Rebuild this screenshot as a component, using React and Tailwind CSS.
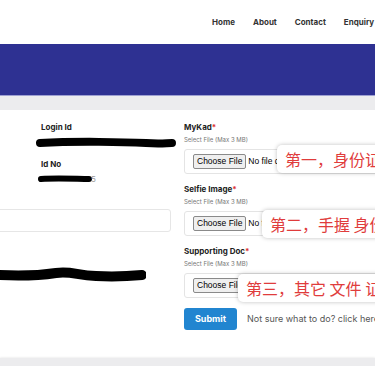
import React from "react";

const font = { fontFamily: "Inter, 'Noto Sans', sans-serif" };

function Scribble({ w, h, d, sw }) {
  return (
    <svg width={w} height={h} viewBox={`0 0 ${w} ${h}`} className="block">
      <path d={d} stroke="#000" strokeWidth={sw} strokeLinecap="round" fill="none" />
    </svg>
  );
}

function FileRow({ label, top, callout, calloutLeft, calloutWidth, noFile }) {
  return (
    <div className="relative">
      <div className="text-[8px] font-bold text-[#222] leading-[10px]">
        {label}
        <span className="text-[#d33]">*</span>
      </div>
      <div className="text-[6px] text-[#777] leading-[8px] mt-[4px]">Select File (Max 3 MB)</div>
      <div className="mt-[5px] h-[25px] w-[220px] border border-[#e4e4e4] rounded-[3px] flex items-center pl-[8px] gap-[2px]">
        <span
          className="h-[15px] px-[3px] flex items-center bg-[#efefef] border border-[#8a8a8a] rounded-[2px] text-[8.5px] text-black"
          style={{ fontFamily: "'Liberation Sans', Arial, sans-serif" }}
        >
          Choose File
        </span>
        <span className="text-[8.5px] text-black" style={{ fontFamily: "'Liberation Sans', Arial, sans-serif" }}>
          {noFile}
        </span>
      </div>
      <div
        className="absolute h-[28px] bg-white rounded-[5px] shadow-[0_0_4px_rgba(0,0,0,0.25)] flex items-center pl-[8px] text-[16px] text-[#e03c3c] whitespace-nowrap"
        style={{ left: calloutLeft, top: top, width: calloutWidth, fontFamily: "'Noto Sans CJK SC', sans-serif" }}
      >
        {callout}
      </div>
    </div>
  );
}

export default function App() {
  return (
    <div className="w-[375px] h-[366px] overflow-hidden bg-white relative" style={font}>
      <nav className="h-[44px] flex items-center pl-[212px] gap-[18px] text-[8px] font-bold text-[#333] whitespace-nowrap">
        <span>Home</span>
        <span>About</span>
        <span>Contact</span>
        <span>Enquiry &amp; Complaint</span>
      </nav>
      <div className="h-[52px] bg-[#2e3192] border-b border-[#9ea0d2]" />
      <div className="h-[14px] bg-[#ececee]" />
      <div className="flex h-[248px]">
        <div className="w-[184px] shrink-0 flex flex-col">
          <div className="pl-[41px] pt-[12px]">
            <div className="text-[8px] font-bold text-[#222] leading-[10px]">Login Id</div>
            <div className="-ml-[5px] mt-[5px]">
              <Scribble w={140} h={12} sw={8} d="M4 6 C40 4 90 5 110 6 C125 7 130 6 136 6" />
            </div>
            <div className="text-[8px] font-bold text-[#222] leading-[10px] mt-[10px]">Id No</div>
            <div className="flex items-center -ml-[3px] mt-[4px]">
              <Scribble w={54} h={8} sw={6} d="M3 4 C20 3 40 4 51 4" />
              <span className="text-[8px] text-[#999] -ml-[1px]">5</span>
            </div>
          </div>
          <div className="mt-[24px] -ml-[8px] w-[179px] h-[23px] border border-[#e6e6e6] rounded-[3px]" />
          <div className="mt-[35px] -ml-[4px]">
            <Scribble w={150} h={16} sw={10} d="M2 8 C20 9 40 9 60 6 C75 4 80 8 100 9 C120 10 135 9 146 8" />
          </div>
        </div>
        <div className="flex flex-col pt-[12px] gap-[10px]">
          <FileRow label="MyKad" top={23} calloutLeft={93} calloutWidth={110} callout="第一，身份证" noFile="No file c" />
          <FileRow label="Selfie Image" top={26} calloutLeft={78} calloutWidth={130} callout="第二，手握 身份证" noFile="No f" />
          <FileRow label="Supporting Doc" top={28} calloutLeft={54} calloutWidth={150} callout="第三，其它 文件 证明" noFile="" />
          <div className="flex items-center mt-0 gap-[10px] whitespace-nowrap">
            <button className="w-[53px] h-[22px] bg-[#2185d0] rounded-[3px] text-white text-[9px] font-bold">Submit</button>
            <span className="text-[9px] text-[#555]">Not sure what to do? click here</span>
          </div>
        </div>
      </div>
      <div className="absolute left-0 right-0 bottom-0 h-[8px] bg-[#ececee] shadow-[0_-1px_2px_rgba(0,0,0,0.06)]" />
    </div>
  );
}
